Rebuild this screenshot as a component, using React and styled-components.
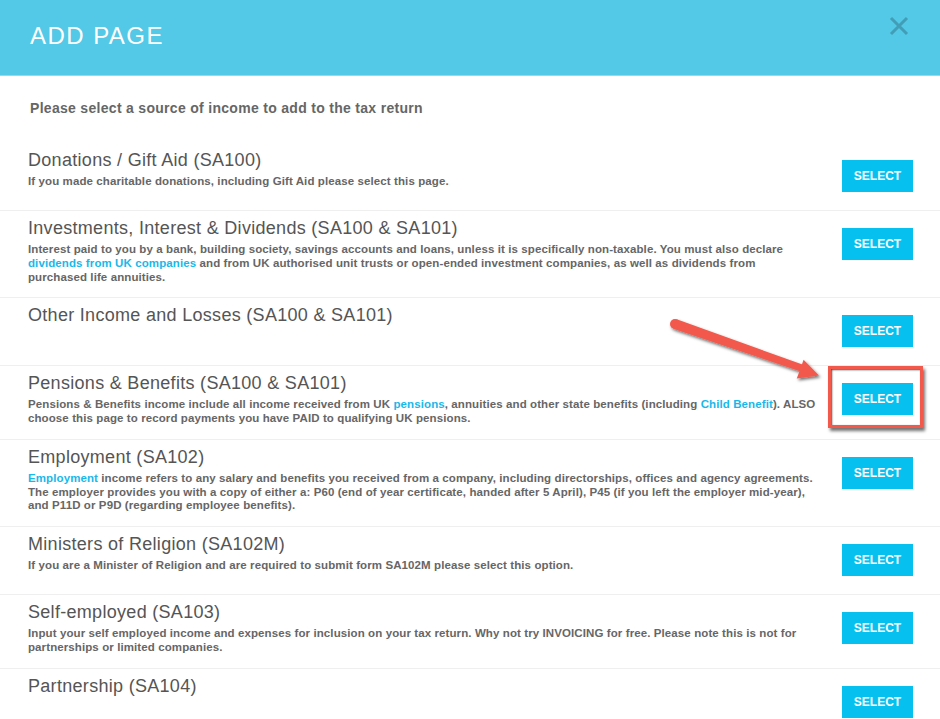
import React from "react";
import styled, { createGlobalStyle } from "styled-components";

const GlobalStyle = createGlobalStyle`
  html, body {
    margin: 0;
    padding: 0;
    background: #ffffff;
    overflow: hidden;
  }
  body {
    font-family: "Liberation Sans", Arial, sans-serif;
  }
`;

const Modal = styled.div`
  position: relative;
  width: 940px;
  height: 719px;
  overflow: hidden;
  background: #ffffff;
`;

const Header = styled.div`
  height: 76px;
  background: #53c9e7;
  border-bottom: 1px solid #8fdcf0;
  display: flex;
  align-items: center;
  justify-content: space-between;
  padding: 0 30px;
  box-sizing: border-box;
`;

const Title = styled.h1`
  margin: 0 0 4px 0;
  font-size: 24px;
  font-weight: 400;
  letter-spacing: 1.45px;
  color: #ffffff;
`;

const CloseButton = styled.button`
  border: 0;
  background: transparent;
  padding: 0;
  margin: 0 1px 24px 0;
  width: 20px;
  height: 20px;
  cursor: pointer;
  display: flex;
`;

const Intro = styled.p`
  margin: 0;
  padding: 22px 30px 25px;
  font-size: 14px;
  line-height: 20px;
  font-weight: 700;
  letter-spacing: 0.3px;
  color: #666666;
`;

const Row = styled.div`
  display: flex;
  justify-content: space-between;
  align-items: flex-start;
  padding: 5px 27px 13px 28px;
  border-bottom: 1px solid #efefef;
`;

const RowText = styled.div`
  flex: 1;
`;

const RowTitle = styled.h2`
  margin: 0;
  font-size: 18px;
  line-height: 24px;
  font-weight: 400;
  letter-spacing: 0.3px;
  color: #555555;
`;

const RowDesc = styled.p`
  margin: 3px 0 0 0;
  font-size: 11.5px;
  line-height: 13.75px;
  font-weight: 700;
  letter-spacing: 0.1px;
  color: #666666;
  white-space: nowrap;
`;

const Link = styled.a`
  color: #19b8ea;
  text-decoration: none;
`;

const ButtonSlot = styled.div`
  position: relative;
  padding: 12px 0 5px;
  margin-left: 20px;

  ${(p) =>
    p.$highlight &&
    `
    &::after {
      content: "";
      position: absolute;
      top: -5px;
      left: -14px;
      right: -10px;
      bottom: -8px;
      border: 3px solid #f2594b;
      box-shadow: 2px 3px 3px rgba(0, 0, 0, 0.55), inset 1px 1px 2px rgba(0, 0, 0, 0.7);
      pointer-events: none;
    }
  `}
`;

const SelectButton = styled.button`
  width: 71px;
  height: 32px;
  border: 0;
  background: #06c0ef;
  color: #ffffff;
  font-family: "Liberation Sans", Arial, sans-serif;
  font-size: 12px;
  font-weight: 700;
  cursor: pointer;
  padding: 0;
`;

const ArrowLayer = styled.svg`
  position: absolute;
  left: 0;
  top: 0;
  pointer-events: none;
`;

const rows = [
  {
    title: "Donations / Gift Aid (SA100)",
    desc: [["If you made charitable donations, including Gift Aid please select this page."]],
  },
  {
    title: "Investments, Interest & Dividends (SA100 & SA101)",
    desc: [
      [
        "Interest paid to you by a bank, building society, savings accounts and loans, unless it is specifically non-taxable. You must also declare",
      ],
      [
        { link: "dividends from UK companies" },
        " and from UK authorised unit trusts or open-ended investment companies, as well as dividends from",
      ],
      ["purchased life annuities."],
    ],
  },
  { title: "Other Income and Losses (SA100 & SA101)", desc: [] },
  {
    title: "Pensions & Benefits (SA100 & SA101)",
    highlight: true,
    desc: [
      [
        "Pensions & Benefits income include all income received from UK ",
        { link: "pensions" },
        ", annuities and other state benefits (including ",
        { link: "Child Benefit" },
        "). ALSO",
      ],
      ["choose this page to record payments you have PAID to qualifying UK pensions."],
    ],
  },
  {
    title: "Employment (SA102)",
    desc: [
      [
        { link: "Employment" },
        " income refers to any salary and benefits you received from a company, including directorships, offices and agency agreements.",
      ],
      [
        "The employer provides you with a copy of either a: P60 (end of year certificate, handed after 5 April), P45 (if you left the employer mid-year),",
      ],
      ["and P11D or P9D (regarding employee benefits)."],
    ],
  },
  {
    title: "Ministers of Religion (SA102M)",
    desc: [["If you are a Minister of Religion and are required to submit form SA102M please select this option."]],
  },
  {
    title: "Self-employed (SA103)",
    desc: [
      [
        "Input your self employed income and expenses for inclusion on your tax return. Why not try INVOICING for free. Please note this is not for",
      ],
      ["partnerships or limited companies."],
    ],
  },
  { title: "Partnership (SA104)", desc: [] },
];

function DescLine({ parts }) {
  return (
    <>
      {parts.map((p, i) =>
        typeof p === "string" ? (
          <React.Fragment key={i}>{p}</React.Fragment>
        ) : (
          <Link key={i} href="#">
            {p.link}
          </Link>
        )
      )}
    </>
  );
}

export default function App() {
  return (
    <>
      <GlobalStyle />
      <Modal>
        <Header>
          <Title>ADD PAGE</Title>
          <CloseButton aria-label="Close">
            <svg width="20" height="20" viewBox="0 0 20 20">
              <path d="M2 2 L18 18 M18 2 L2 18" stroke="#429db6" strokeWidth="3" fill="none" />
            </svg>
          </CloseButton>
        </Header>
        <Intro>Please select a source of income to add to the tax return</Intro>
        {rows.map((row) => (
          <Row key={row.title}>
            <RowText>
              <RowTitle>{row.title}</RowTitle>
              {row.desc.length > 0 && (
                <RowDesc>
                  {row.desc.map((line, i) => (
                    <React.Fragment key={i}>
                      {i > 0 && <br />}
                      <DescLine parts={line} />
                    </React.Fragment>
                  ))}
                </RowDesc>
              )}
            </RowText>
            <ButtonSlot $highlight={row.highlight}>
              <SelectButton>SELECT</SelectButton>
            </ButtonSlot>
          </Row>
        ))}
        <ArrowLayer width="940" height="719" viewBox="0 0 940 719">
          <defs>
            <filter id="arrowShadow" x="-10%" y="-20%" width="130%" height="160%">
              <feDropShadow dx="1.5" dy="2" stdDeviation="1.5" floodColor="#000" floodOpacity="0.55" />
            </filter>
          </defs>
          <g filter="url(#arrowShadow)" fill="#f2594b">
            <circle cx="675" cy="324" r="5" />
            <polygon points="673.3,328.7 676.7,319.3 803.1,364.8 800.7,371.4" />
            <polygon points="819,375.5 796.8,378.6 803.6,359.8" />
          </g>
        </ArrowLayer>
      </Modal>
    </>
  );
}
